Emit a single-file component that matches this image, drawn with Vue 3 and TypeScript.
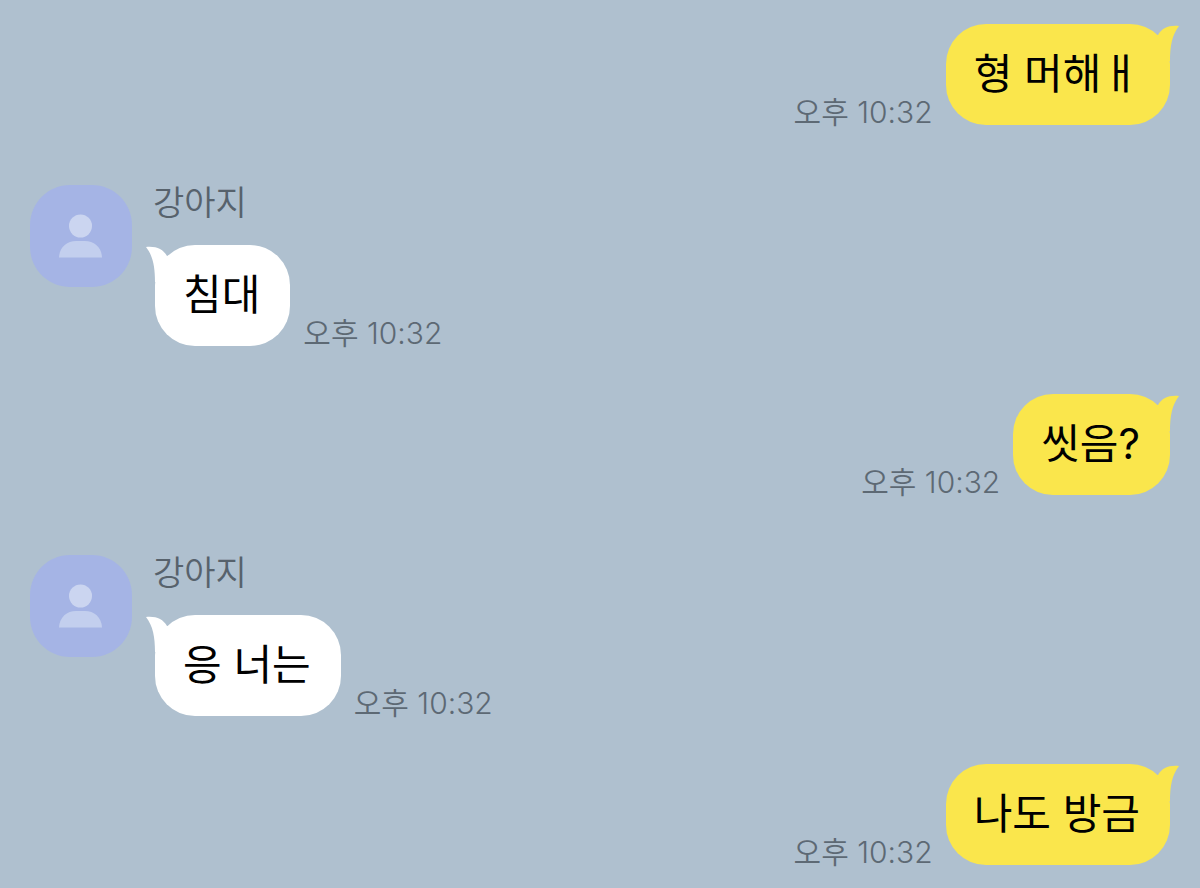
<script setup lang="ts">
interface Message {
  id: number
  sender: string | null
  text: string
  time: string
}

const messages: Message[] = [
  { id: 1, sender: null, text: '형 머해ㅐ', time: '오후 10:32' },
  { id: 2, sender: '강아지', text: '침대', time: '오후 10:32' },
  { id: 3, sender: null, text: '씻음?', time: '오후 10:32' },
  { id: 4, sender: '강아지', text: '응 너는', time: '오후 10:32' },
  { id: 5, sender: null, text: '나도 방금', time: '오후 10:32' },
]
</script>

<template>
  <main class="chat">
    <article
      v-for="message in messages"
      :key="message.id"
      class="message"
      :class="message.sender ? 'received' : 'sent'"
    >
      <div v-if="message.sender" class="avatar">
        <svg viewBox="0 0 102 102" aria-hidden="true">
          <path
            class="avatar-tile"
            d="M40 0H62C84 0 102 18 102 40V62C102 84 84 102 62 102H40C18 102 0 84 0 62V40C0 18 18 0 40 0Z"
          />
          <circle class="avatar-head" cx="50.5" cy="41" r="11.5" />
          <path class="avatar-body" d="M29 72.5C29.5 62 37 56 46 56H55C64 56 71.500 62 72 72.5Z" />
        </svg>
      </div>
      <div class="content">
        <span v-if="message.sender" class="name">{{ message.sender }}</span>
        <div class="line">
          <p class="bubble">
            <svg class="tail" viewBox="0 0 32 36" aria-hidden="true">
              <path d="M0 1C10 0 17 3 21 10L32 12V36H9C9 21 7 10 0 1Z" />
            </svg>
            <span class="text">{{ message.text }}</span>
          </p>
          <time class="time" datetime="22:32">{{ message.time }}</time>
        </div>
      </div>
    </article>
  </main>
</template>

<style>
body {
  margin: 0;
  background: #afc0cf;
}
</style>

<style scoped>
.chat {
  box-sizing: border-box;
  min-height: 100vh;
  padding: 24px 30px 22px;
  background: #afc0cf;
  font-family: Inter, "Noto Sans CJK KR", sans-serif;
}

.message {
  display: flex;
}

.received {
  gap: 23px;
  margin: 60px 0 48px;
}

.sent {
  justify-content: flex-end;
}

.avatar {
  flex: none;
  width: 102px;
  height: 102px;
}

.avatar svg {
  display: block;
  width: 100%;
  height: 100%;
}

.avatar-tile {
  fill: #a5b4e5;
}

.avatar-head {
  fill: #cbd5f0;
}

.avatar-body {
  fill: #c3cfee;
}

.name {
  display: block;
  height: 36px;
  margin: 0 0 24px -2px;
  color: #57626c;
  font-size: 34px;
  font-weight: 350;
  line-height: 36px;
}

.line {
  display: flex;
  align-items: flex-end;
  gap: 13px;
}

.sent .line {
  flex-direction: row-reverse;
}

.bubble {
  position: relative;
  margin: 0;
  padding: 20px 30px 21px 28px;
  border-radius: 40px;
  background: #fff;
  color: #000;
  font-size: 42px;
  font-weight: 400;
  line-height: 60px;
}

.sent .bubble {
  background: #fae64c;
}

.text {
  position: relative;
}

.tail {
  position: absolute;
  top: 1px;
  left: -9px;
  width: 32px;
  height: 36px;
  fill: #fff;
}

.sent .tail {
  right: -9px;
  left: auto;
  fill: #fae64c;
  transform: scaleX(-1);
}

.time {
  color: #5d6974;
  font-size: 30px;
  font-weight: 350;
  line-height: 26px;
}
</style>
